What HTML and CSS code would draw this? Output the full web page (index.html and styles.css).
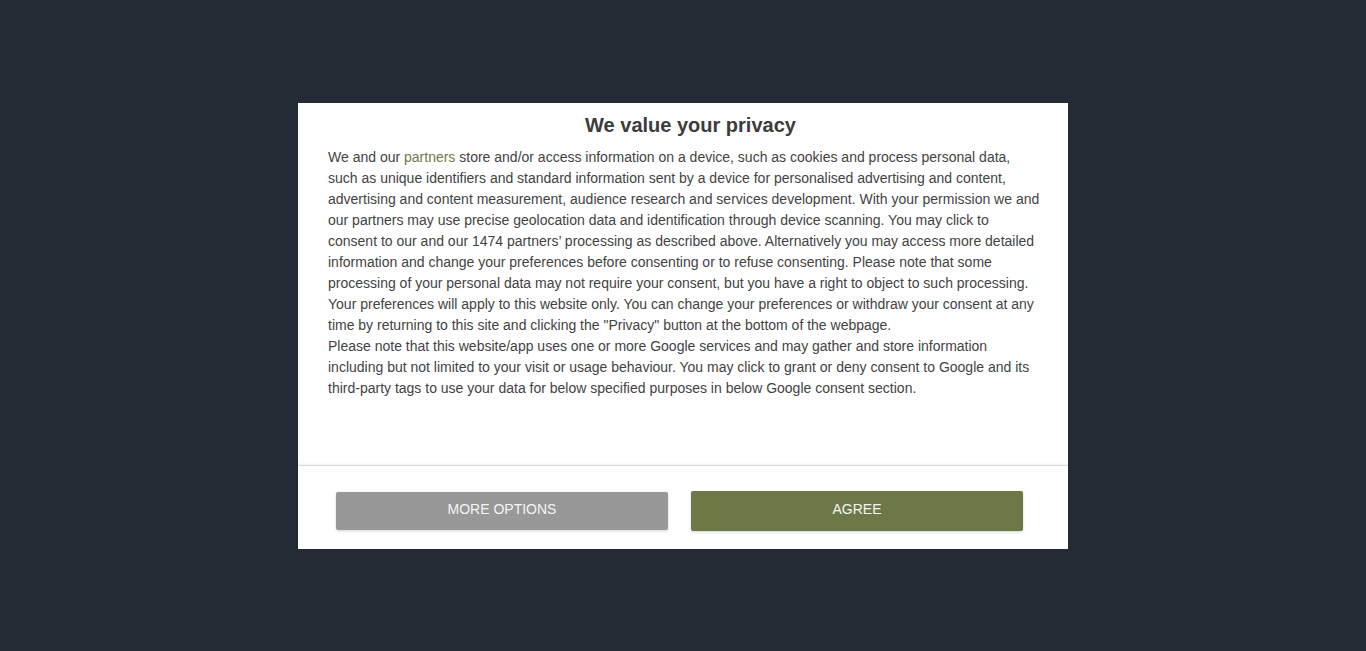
FILE: index.html
```html
<!DOCTYPE html>
<html>
<head>
<meta charset="utf-8">
<title>Privacy</title>
<link rel="stylesheet" href="styles.css">
</head>
<body>
<div class="overlay">
  <div class="dialog">
    <div class="content">
      <h2 class="title">We value your privacy</h2>
      <div class="body">
        <p>We and our <a class="link" href="#">partners</a> store and/or access information on a device, such as cookies and process personal data, such as unique identifiers and standard information sent by a device for personalised advertising and content, advertising and content measurement, audience research and services development. With your permission we and our partners may use precise geolocation data and identification through device scanning. You may click to consent to our and our 1474 partners’ processing as described above. Alternatively you may access more detailed information and change your preferences before consenting or to refuse consenting. Please note that some processing of your personal data may not require your consent, but you have a right to object to such processing. Your preferences will apply to this website only. You can change your preferences or withdraw your consent at any time by returning to this site and clicking the "Privacy" button at the bottom of the webpage.</p>
        <p>Please note that this website/app uses one or more Google services and may gather and store information including but not limited to your visit or usage behaviour. You may click to grant or deny consent to Google and its third-party tags to use your data for below specified purposes in below Google consent section.</p>
      </div>
    </div>
    <div class="footer">
      <button class="btn btn-more">MORE OPTIONS</button>
      <button class="btn btn-agree">AGREE</button>
    </div>
  </div>
</div>
</body>
</html>
```
FILE: styles.css
```css
html, body {
  margin: 0;
  padding: 0;
  height: 100%;
}
body {
  background: #252b35;
  font-family: "Liberation Sans", Arial, sans-serif;
  color: #404040;
}
.overlay {
  height: 100%;
  display: flex;
  justify-content: center;
  padding-top: 103px;
  box-sizing: border-box;
}
.dialog {
  width: 770px;
  height: 446px;
  background: #fff;
  display: flex;
  flex-direction: column;
}
.content {
  height: 362px;
  padding: 10px 27px 0 30px;
  box-sizing: border-box;
}
.title {
  margin: 0;
  font-size: 20px;
  line-height: 24px;
  font-weight: bold;
  text-align: center;
  color: #3c3c3c;
  padding-left: 12px;
}
.body {
  margin-top: 10px;
  font-size: 14px;
  line-height: 21px;
  color: #434343;
}
.body p {
  margin: 0;
}
.link {
  color: #6f7b46;
  text-decoration: none;
}
.footer {
  border-top: 1px solid #dcdcdc;
  box-shadow: 0 -1px 2px rgba(0,0,0,0.06);
  flex: 1;
  display: flex;
  gap: 23px;
  padding: 26px 45px 0 38px;
  align-items: flex-start;
}
.btn {
  width: 332px;
  height: 38px;
  border: none;
  border-radius: 2px;
  font-family: "Liberation Sans", Arial, sans-serif;
  font-size: 14px;
  line-height: 16px;
  color: #f5f5f5;
  box-shadow: 0 1px 3px rgba(0,0,0,0.18);
  cursor: pointer;
  padding: 0 0 4px 0;
}
.btn-more {
  background: #979897;
}
.btn-agree {
  background: #6c7846;
  height: 40px;
  margin-top: -1px;
}
```
